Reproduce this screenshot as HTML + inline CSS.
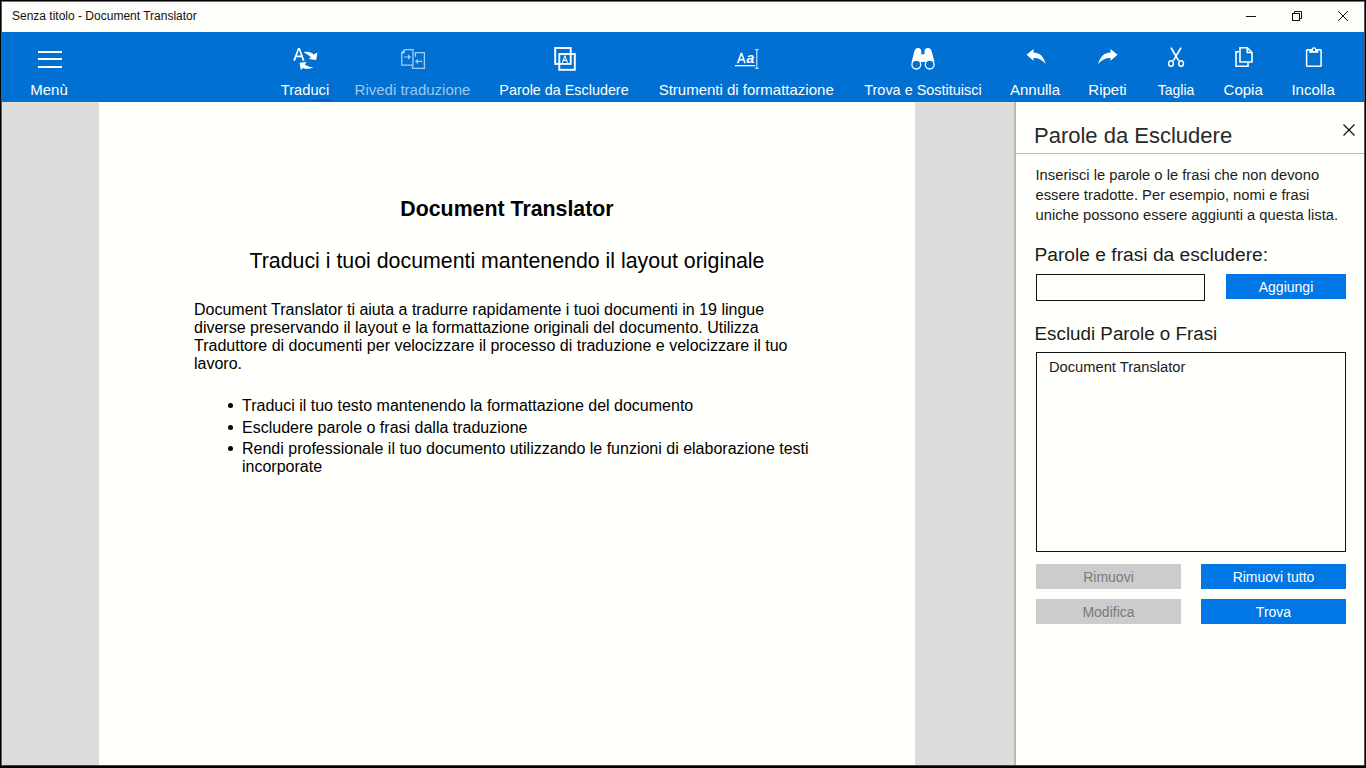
<!DOCTYPE html>
<html><head><meta charset="utf-8">
<style>
*{margin:0;padding:0;box-sizing:border-box}
html,body{width:1366px;height:768px;overflow:hidden;background:#000;font-family:"Liberation Sans",sans-serif}
.a{position:absolute}
.t{position:absolute;white-space:pre;line-height:1}
#title{left:1px;top:1px;width:1363px;height:31px;background:#fdfdf9}
#tb{left:1px;top:32px;width:1363px;height:70px;background:#0070d2}
#content{left:1px;top:102px;width:1363px;height:663px;background:#dcdcdc}
#page{left:99px;top:102px;width:816px;height:663px;background:#fffffb}
#pborder{left:1014px;top:102px;width:2px;height:663px;background:#b7bbad}
#panel{left:1016px;top:102px;width:348px;height:663px;background:#fffffb}
.lbl{position:absolute;top:80px;color:#fff;font-size:15px;white-space:pre;line-height:20px;transform:translateX(-50%)}
.dt{position:absolute;white-space:pre;color:#000;font-size:16px;line-height:18px}
.pt{position:absolute;white-space:pre;color:#1c1c1c}
.btn{position:absolute;height:25px;font-size:14px;line-height:26px;text-align:center;white-space:pre}
</style></head><body>
<div id="title" class="a"></div>
<div class="t" style="left:12px;top:10px;font-size:12px;color:#111">Senza titolo - Document Translator</div>
<!-- window controls -->
<svg class="a" style="left:1230px;top:1px" width="134" height="31" viewBox="1230 1 134 31">
  <line x1="1246" y1="16.5" x2="1256" y2="16.5" stroke="#111" stroke-width="1"/>
  <rect x="1292.5" y="13.5" width="7" height="7" fill="none" stroke="#111" stroke-width="1"/>
  <path d="M1294.5 13.5V11.5H1301.5V18.5H1299.5" fill="none" stroke="#111" stroke-width="1"/>
  <path d="M1338 11L1348 21M1348 11L1338 21" stroke="#111" stroke-width="1"/>
</svg>

<div id="tb" class="a"></div>
<div id="content" class="a"></div>
<div class="a" style="left:1px;top:102px;width:98px;height:1px;background:#e9e4da"></div>
<div class="a" style="left:915px;top:102px;width:99px;height:1px;background:#e9e4da"></div>
<div id="page" class="a"></div>
<div id="pborder" class="a"></div>
<div id="panel" class="a"></div>

<svg class="a" style="left:0;top:32px" width="1366" height="70" viewBox="0 32 1366 70">
  <!-- hamburger -->
  <rect x="38" y="51" width="24" height="2" fill="#fff"/>
  <rect x="38" y="58" width="24" height="2" fill="#fff"/>
  <rect x="38" y="66" width="24" height="2" fill="#fff"/>
  <!-- translate -->
  <path fill-rule="evenodd" d="M293.2 60.8L297.9 48H299.9L304.6 60.8H302.7L301.5 57.3H296.3L295.1 60.8ZM296.9 55.6H300.9L298.9 49.9Z" fill="#fff"/>
  <path d="M304.2 52C307.8 51.3 311.5 52.2 313.8 54.5L317.4 52.6L316.2 60L308.8 58.9L310.9 57.3C309.8 56.1 307.2 54 304.2 52.8Z" fill="#fff"/>
  <path d="M312.8 67C309.8 67.1 306.8 66.2 304.7 64.2L306.9 62.1L299.6 62.8L300.8 70L302.8 68C306 69.3 310 69 312.8 67.6Z" fill="#fff"/>
  <!-- rivedi -->
  <g fill="none" stroke="#a3cdf3" stroke-width="1.3">
    <path d="M404.8 49.6H413V65.2H401.7V52.6Z"/>
    <path d="M415.4 56.8V52.6H424.4V68.3H412.6V66"/>
  </g>
  <path d="M401.7 52.6L404.8 49.6V53.6H401.7Z" fill="#a3cdf3"/>
  <path d="M403.8 56.4H408V54.3L411 57L408 59.7V57.6H403.8Z" fill="#a3cdf3"/>
  <path d="M422.2 60.8H418V58.7L415 61.4L418 64.1V62H422.2Z" fill="#a3cdf3"/>
  <!-- parole -->
  <g fill="none" stroke="#fff" stroke-width="1.9">
    <rect x="555.2" y="48" width="15.5" height="15.9"/>
    <rect x="559.3" y="54" width="15.5" height="15.8"/>
  </g>
  <path d="M562.3 62.6L564.9 55.9L567.5 62.6M563.3 60.4H566.5" fill="none" stroke="#fff" stroke-width="1.1"/>
  <!-- Aa -->
  <path fill-rule="evenodd" d="M736.9 63.3L740.6 52.8H742.2L745.9 63.3H744.2L743.2 60.6H739.6L738.6 63.3ZM740.1 59.1H742.7L741.4 55.2Z" fill="#fff"/>
  <text x="746.6" y="63.2" font-family="Liberation Sans" font-style="italic" font-size="14" font-weight="bold" fill="#fff">a</text>
  <rect x="735" y="65" width="20" height="1.3" fill="#fff"/>
  <path d="M756.8 49.8V68.2M755 49.6H758.8M755 68.4H758.8" fill="none" stroke="#b5d7f6" stroke-width="1.3"/>
  <!-- binoculars -->
  <path d="M911.5 62.5L914.3 51.5Q915 48 918 48Q921.3 48 921.3 51.5V54.2H924.5V51.5Q924.5 48 928 48Q931 48 931.7 51.5L934.5 61.5Z" fill="#fff"/>
  <circle cx="916.3" cy="64.6" r="4.4" fill="#0070d2" stroke="#fff" stroke-width="1.3"/>
  <circle cx="929.7" cy="64.6" r="4.4" fill="#0070d2" stroke="#fff" stroke-width="1.3"/>
  <!-- undo -->
  <path d="M1026.5 54.7L1033.5 49.1V52.4C1039 52.5 1044 56 1045.6 63.9C1042 59.5 1038 57.8 1033.5 58V60.75Z" fill="#fff"/>
  <!-- redo -->
  <path d="M1117.6 54.7L1110.5 49.1V52.4C1105 52.5 1100 56 1098.2 63.9C1102 59.5 1106 57.8 1110.5 58V60.75Z" fill="#fff"/>
  <!-- scissors -->
  <path d="M1171 47.6L1178.6 60.6M1181 47.6L1173.4 60.6" fill="none" stroke="#fff" stroke-width="1.8"/>
  <ellipse cx="1171" cy="63.55" rx="2.35" ry="2.75" fill="none" stroke="#fff" stroke-width="1.5"/>
  <ellipse cx="1181.1" cy="63.55" rx="2.35" ry="2.75" fill="none" stroke="#fff" stroke-width="1.5"/>
  <!-- copy -->
  <g fill="none" stroke="#fff" stroke-width="1.6">
    <path d="M1240 47.8H1247.3L1252 52.5V62H1240Z"/>
    <path d="M1247.3 47.8V52.5H1252"/>
    <path d="M1239.2 51.8H1236V66.2H1248V62.8"/>
  </g>
  <!-- paste -->
  <rect x="1306.6" y="49.8" width="14.5" height="16.4" rx="0.8" fill="none" stroke="#fff" stroke-width="1.5"/>
  <rect x="1309.2" y="50" width="9.2" height="2.8" fill="#fff"/>
  <circle cx="1314" cy="49.7" r="1.8" fill="#0070d2" stroke="#fff" stroke-width="1.2"/>
  <!-- indicator -->
  <rect x="311" y="100" width="20" height="1" fill="#0058b4"/>
</svg>
<!-- toolbar labels -->
<div class="lbl" style="left:49px">Menù</div>
<div class="lbl" style="left:305px;transform:translateX(-50%) scaleX(.977)">Traduci</div>
<div class="lbl" style="left:412.5px;color:#9cc8f0">Rivedi traduzione</div>
<div class="lbl" style="left:563.6px;transform:translateX(-50%) scaleX(.957)">Parole da Escludere</div>
<div class="lbl" style="left:746.2px">Strumenti di formattazione</div>
<div class="lbl" style="left:923.4px;transform:translateX(-50%) scaleX(.963)">Trova e Sostituisci</div>
<div class="lbl" style="left:1035px">Annulla</div>
<div class="lbl" style="left:1107.5px">Ripeti</div>
<div class="lbl" style="left:1175.6px;transform:translateX(-50%) scaleX(.933)">Taglia</div>
<div class="lbl" style="left:1243.2px">Copia</div>
<div class="lbl" style="left:1313.1px">Incolla</div>

<!-- document -->
<div class="dt" style="left:99px;width:816px;text-align:center;top:199px;font-size:21.33px;font-weight:bold;line-height:20px">Document Translator</div>
<div class="dt" style="left:99px;width:816px;text-align:center;top:251px;font-size:21.33px;line-height:20px">Traduci i tuoi documenti mantenendo il layout originale</div>
<div class="dt" style="left:194px;top:301px">Document Translator ti aiuta a tradurre rapidamente i tuoi documenti in 19 lingue
diverse preservando il layout e la formattazione originali del documento. Utilizza
Traduttore di documenti per velocizzare il processo di traduzione e velocizzare il tuo
lavoro.</div>
<div class="a" style="left:228px;top:403px;width:5px;height:5px;border-radius:50%;background:#000"></div>
<div class="a" style="left:228px;top:425px;width:5px;height:5px;border-radius:50%;background:#000"></div>
<div class="a" style="left:228px;top:446px;width:5px;height:5px;border-radius:50%;background:#000"></div>
<div class="dt" style="left:242px;top:397px">Traduci il tuo testo mantenendo la formattazione del documento</div>
<div class="dt" style="left:242px;top:419px">Escludere parole o frasi dalla traduzione</div>
<div class="dt" style="left:242px;top:440px">Rendi professionale il tuo documento utilizzando le funzioni di elaborazione testi
incorporate</div>

<!-- panel -->
<div class="pt" style="left:1034px;top:123px;font-size:22px;line-height:26px;color:#2a2a2a">Parole da Escludere</div>
<div class="a" style="left:1016px;top:153px;width:348px;height:1px;background:#bcc0b2"></div>
<svg class="a" style="left:1340px;top:120px" width="20" height="20" viewBox="1340 120 20 20">
  <path d="M1343.5 124.5L1354.5 135.5M1354.5 124.5L1343.5 135.5" stroke="#111" stroke-width="1.2"/>
</svg>
<div class="pt" style="left:1035.5px;top:165px;font-size:14.75px;line-height:20px">Inserisci le parole o le frasi che non devono
essere tradotte. Per esempio, nomi e frasi
uniche possono essere aggiunti a questa lista.</div>
<div class="pt" style="left:1034.5px;top:244px;font-size:19.2px;line-height:22px">Parole e frasi da escludere:</div>
<div class="a" style="left:1036px;top:274px;width:169px;height:27px;border:1.3px solid #111;background:#fffffb"></div>
<div class="btn" style="left:1226px;top:274px;width:120px;background:#0077e4;color:#fff">Aggiungi</div>
<div class="pt" style="left:1034.6px;top:323px;font-size:18.8px;line-height:22px">Escludi Parole o Frasi</div>
<div class="a" style="left:1036px;top:352px;width:310px;height:200px;border:1px solid #111;background:#fffffb"></div>
<div class="pt" style="left:1049px;top:357px;font-size:14.7px;line-height:20px">Document Translator</div>
<div class="btn" style="left:1036px;top:564px;width:145px;background:#cccccc;color:#7a7a7a">Rimuovi</div>
<div class="btn" style="left:1201px;top:564px;width:145px;background:#0077e4;color:#fff">Rimuovi tutto</div>
<div class="btn" style="left:1036px;top:599px;width:145px;background:#cccccc;color:#7a7a7a">Modifica</div>
<div class="btn" style="left:1201px;top:599px;width:145px;background:#0077e4;color:#fff">Trova</div>
<div class="a" style="left:1px;top:1px;width:1px;height:764px;background:#5a5a5a"></div>
<div class="a" style="left:1px;top:1px;width:1363px;height:1px;background:#707070"></div>
<div class="a" style="left:1364px;top:1px;width:1px;height:765px;background:#505050"></div>
<div class="a" style="left:1px;top:765px;width:1364px;height:1px;background:#444"></div>
<div class="a" style="left:2px;top:102px;width:1px;height:663px;background:#e4e4e4"></div>
<div class="a" style="left:2px;top:2px;width:1362px;height:1px;background:#fff"></div>
</body></html>
